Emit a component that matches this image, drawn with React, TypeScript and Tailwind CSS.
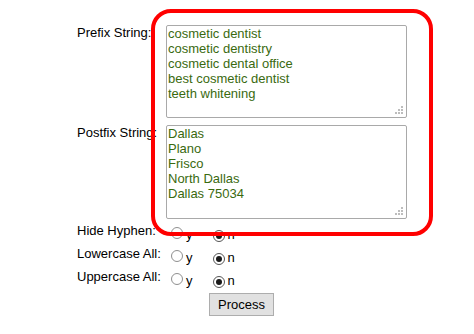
import React from 'react';

const prefixLines = [
    'cosmetic dentist',
    'cosmetic dentistry',
    'cosmetic dental office',
    'best cosmetic dentist',
    'teeth whitening',
];

const postfixLines = ['Dallas', 'Plano', 'Frisco', 'North Dallas', 'Dallas 75034'];

function Grip() {
    return (
        <svg
            className="absolute right-[3px] bottom-[3px]"
            width="9"
            height="9"
            viewBox="0 0 9 9"
            fill="#bdbdbd"
        >
            <rect x="6" y="0" width="2" height="2" />
            <rect x="3" y="3" width="2" height="2" />
            <rect x="6" y="3" width="2" height="2" />
            <rect x="0" y="6" width="2" height="2" />
            <rect x="3" y="6" width="2" height="2" />
            <rect x="6" y="6" width="2" height="2" />
        </svg>
    );
}

function Field({ lines, height }: { lines: string[]; height: string }) {
    return (
        <div className={`relative w-[241px] ${height}`}>
            <textarea
                readOnly
                defaultValue={lines.join('\n')}
                className="block w-full h-full resize-none overflow-hidden border border-[#a9a9a9] rounded-[2px] bg-white px-[1px] pt-0 text-[13px] leading-[15px] text-[#3a6a10] outline-none"
                style={{ fontFamily: '"Liberation Sans", Arial, sans-serif' }}
            />
            <Grip />
        </div>
    );
}

function Radio({ checked }: { checked?: boolean }) {
    return (
        <span
            className={`inline-flex items-center justify-center w-[12px] h-[12px] rounded-full border bg-white align-baseline ${checked ? 'border-[#555]' : 'border-[#8f8f8f]'}`}
        >
            {checked && <span className="block w-[6px] h-[6px] rounded-full bg-[#1a1a1a]" />}
        </span>
    );
}

function OptionRow({ label, height }: { label: string; height: string }) {
    return (
        <div className={`flex items-start ${height}`}>
            <div className="w-[166px] pl-[77px] leading-[15px]">{label}</div>
            <div className="mt-[4px] leading-[15px] whitespace-nowrap">
                <span className="ml-[5px] mr-[3px]">
                    <Radio />
                </span>
                y
                <span className="ml-[20px] mr-[3px]">
                    <Radio checked />
                </span>
                n
            </div>
        </div>
    );
}

export default function App() {
    return (
        <div
            className="relative w-[474px] h-[334px] bg-white pt-[25px] text-[13px] text-black"
            style={{ fontFamily: '"Liberation Sans", Arial, sans-serif' }}
        >
            <div className="flex items-start">
                <div className="w-[166px] pl-[77px] leading-[15px] whitespace-nowrap">Prefix String:</div>
                <Field lines={prefixLines} height="h-[93px]" />
            </div>

            <div className="flex items-start mt-[7px]">
                <div className="w-[166px] pl-[77px] leading-[15px] whitespace-nowrap">Postfix String:</div>
                <Field lines={postfixLines} height="h-[94px]" />
            </div>

            <div className="mt-[4px]">
                <OptionRow label="Hide Hyphen:" height="h-[23px]" />
                <OptionRow label="Lowercase All:" height="h-[23px]" />
                <OptionRow label="Uppercase All:" height="h-[20px]" />
            </div>

            <div className="mt-[4px] pl-[209px]">
                <button className="w-[65px] h-[23px] border border-[#adadad] bg-[#e1e1e1] text-[13px] leading-[21px] text-black">
                    Process
                </button>
            </div>

            {/* red highlight drawn over the two text fields */}
            <div className="absolute left-[151px] top-[9px] w-[282px] h-[227px] rounded-[20px] border-[4px] border-[#ff0000] pointer-events-none" />
        </div>
    );
}
